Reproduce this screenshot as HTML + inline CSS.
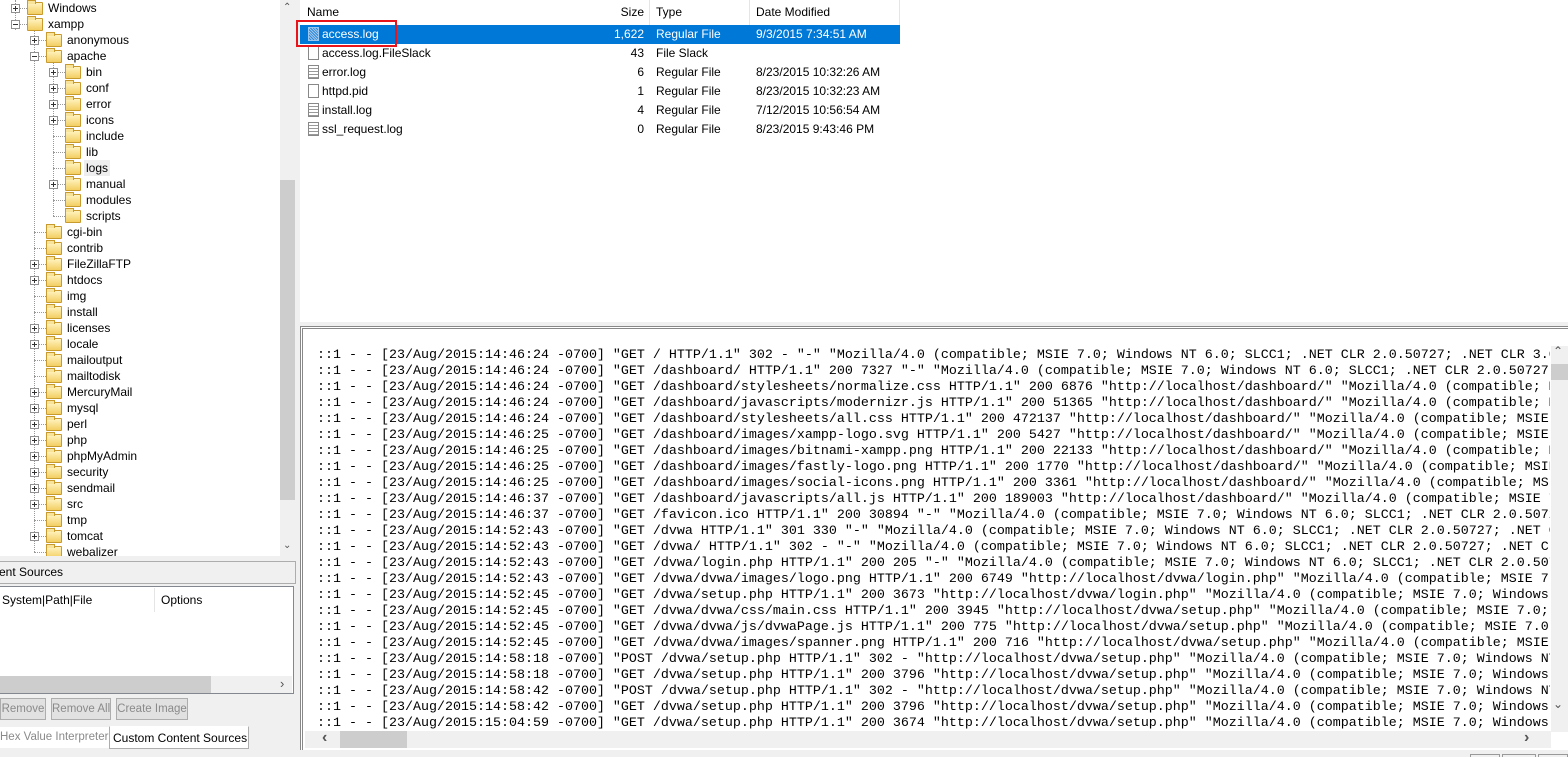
<!DOCTYPE html>
<html><head><meta charset="utf-8"><style>
*{margin:0;padding:0;box-sizing:border-box}
body{width:1568px;height:757px;overflow:hidden;background:#f0f0f0;font-family:"Liberation Sans",sans-serif;font-size:12px;color:#000;position:relative}
.a{position:absolute;white-space:nowrap}
.tree{left:0;top:0;width:280px;height:556px;background:#fff;overflow:hidden}
.row{position:absolute;height:16px;line-height:16px;white-space:nowrap}
.exp{position:absolute;width:9px;height:9px;border:1px solid #919191;background:#fff;top:4px}
.exp:before{content:"";position:absolute;left:1px;top:3px;width:5px;height:1px;background:#333}
.exp.p:after{content:"";position:absolute;left:3px;top:1px;width:1px;height:5px;background:#333}
.fold{position:absolute;top:1px;width:16px;height:13px;border:1px solid #c99a2e;border-radius:1px;background:linear-gradient(#fff3c0,#f3cf63)}
.fold:before{content:"";position:absolute;left:-1px;top:-3px;width:7px;height:3px;border:1px solid #c99a2e;border-bottom:none;background:#f8e39a}
.dot{position:absolute;border-top:1px dotted #999;height:0;top:8px}
.vd{position:absolute;border-left:1px dotted #999;width:0}
.lst{left:300px;top:0;width:600px;height:140px}
.lr{position:absolute;left:0;width:600px;height:19px;line-height:19px;font-size:12px}
.log{left:305px;top:348px;width:1245px;height:382px;overflow:hidden;font-family:"Liberation Mono",monospace;font-size:13.33px;line-height:16px;white-space:pre;padding-left:12px}
.btn{position:absolute;top:698px;height:22px;line-height:20px;border:1px solid #adadad;background:#e1e1e1;color:#8a8a8a;text-align:center;white-space:nowrap;overflow:hidden;font-size:11.5px}
.fi{position:absolute;left:8px;top:2px;width:11px;height:14px;border:1px solid #888;background:#fff}
</style></head><body>
<div class="a tree" id="tree"></div>
<div class="a" style="left:280px;top:0;width:16px;height:556px;background:#f0f0f0"></div>
<div class="a" style="left:280px;top:180px;width:15px;height:320px;background:#cdcdcd"></div>
<div class="a" style="left:283px;top:2px;font-size:10px;color:#555">&#8963;</div>
<div class="a" style="left:283px;top:540px;font-size:10px;color:#555">&#8964;</div>
<div class="a" style="left:-2px;top:561px;width:298px;height:23px;border:1px solid #adadad;background:#f0f0f0;line-height:21px;font-size:12px">ent Sources</div>
<div class="a" style="left:-2px;top:586px;width:296px;height:108px;border:1px solid #828790;background:#fff"></div>
<div class="a" style="left:2px;top:593px;line-height:14px">System|Path|File</div>
<div class="a" style="left:154px;top:588px;width:1px;height:24px;background:#e5e5e5"></div>
<div class="a" style="left:161px;top:593px;line-height:14px">Options</div>
<div class="a" style="left:0;top:676px;width:292px;height:17px;background:#f0f0f0"></div>
<div class="a" style="left:0;top:676px;width:211px;height:17px;background:#cdcdcd"></div>
<div class="a" style="left:280px;top:676px;font-size:13px;color:#555">&#8250;</div>
<div class="btn" style="left:0;width:46px">Remove</div>
<div class="btn" style="left:51px;width:60px">Remove All</div>
<div class="btn" style="left:116px;width:72px">Create Image</div>
<div class="a" style="left:0;top:727px;width:110px;height:21px;line-height:21px;color:#8a8a8a;background:#fff;overflow:hidden;font-size:11.5px">Hex Value Interpreter</div>
<div class="a" style="left:109px;top:726px;width:140px;height:23px;line-height:22px;background:#fff;border:1px solid #adadad;border-top:1px solid #fff;padding-left:3px">Custom Content Sources</div>
<div class="a" style="left:297px;top:0;width:3px;height:757px;background:#f0f0f0"></div>
<div class="a" style="left:300px;top:0;width:1268px;height:322px;background:#fff"></div>
<div class="a lst">
<div class="a" style="left:0;top:0;width:600px;height:25px;line-height:25px">
<span class="a" style="left:7px">Name</span><span class="a" style="left:300px;width:44px;text-align:right">Size</span><span class="a" style="left:349px;top:0;width:1px;height:25px;background:#e5e5e5"></span><span class="a" style="left:356px">Type</span><span class="a" style="left:449px;top:0;width:1px;height:25px;background:#e5e5e5"></span><span class="a" style="left:456px">Date Modified</span><span class="a" style="left:599px;top:0;width:1px;height:25px;background:#e5e5e5"></span>
</div>
<div class="lr" style="top:25px;background:#0078d7;color:#fff"><div class="fi" style="background:repeating-linear-gradient(45deg,#9cc7ee 0 1px,#2f87d8 1px 2px);border-color:#9cc7ee"></div><span class="a" style="left:22px">access.log</span><span class="a" style="left:260px;width:84px;text-align:right">1,622</span><span class="a" style="left:356px">Regular File</span><span class="a" style="left:456px">9/3/2015 7:34:51 AM</span></div>
<div class="lr" style="top:44px"><div class="fi"></div><span class="a" style="left:22px">access.log.FileSlack</span><span class="a" style="left:260px;width:84px;text-align:right">43</span><span class="a" style="left:356px">File Slack</span></div>
<div class="lr" style="top:63px"><div class="fi" style="background:repeating-linear-gradient(#fff 0 2px,#999 2px 3px)"></div><span class="a" style="left:22px">error.log</span><span class="a" style="left:260px;width:84px;text-align:right">6</span><span class="a" style="left:356px">Regular File</span><span class="a" style="left:456px">8/23/2015 10:32:26 AM</span></div>
<div class="lr" style="top:82px"><div class="fi"></div><span class="a" style="left:22px">httpd.pid</span><span class="a" style="left:260px;width:84px;text-align:right">1</span><span class="a" style="left:356px">Regular File</span><span class="a" style="left:456px">8/23/2015 10:32:23 AM</span></div>
<div class="lr" style="top:101px"><div class="fi" style="background:repeating-linear-gradient(#fff 0 2px,#999 2px 3px)"></div><span class="a" style="left:22px">install.log</span><span class="a" style="left:260px;width:84px;text-align:right">4</span><span class="a" style="left:356px">Regular File</span><span class="a" style="left:456px">7/12/2015 10:56:54 AM</span></div>
<div class="lr" style="top:120px"><div class="fi" style="background:repeating-linear-gradient(#fff 0 2px,#999 2px 3px)"></div><span class="a" style="left:22px">ssl_request.log</span><span class="a" style="left:260px;width:84px;text-align:right">0</span><span class="a" style="left:356px">Regular File</span><span class="a" style="left:456px">8/23/2015 9:43:46 PM</span></div>
</div>
<div class="a" style="left:296px;top:20px;width:101px;height:27px;border:2px solid #e8141b"></div>
<div class="a" style="left:300px;top:326px;width:1268px;height:424px;border-top:3px double #888;border-left:3px double #888;background:#fff"></div>
<div class="a log">::1 - - [23/Aug/2015:14:46:24 -0700] "GET / HTTP/1.1" 302 - "-" "Mozilla/4.0 (compatible; MSIE 7.0; Windows NT 6.0; SLCC1; .NET CLR 2.0.50727; .NET CLR 3.0
::1 - - [23/Aug/2015:14:46:24 -0700] "GET /dashboard/ HTTP/1.1" 200 7327 "-" "Mozilla/4.0 (compatible; MSIE 7.0; Windows NT 6.0; SLCC1; .NET CLR 2.0.50727
::1 - - [23/Aug/2015:14:46:24 -0700] "GET /dashboard/stylesheets/normalize.css HTTP/1.1" 200 6876 "http://localhost/dashboard/" "Mozilla/4.0 (compatible; M
::1 - - [23/Aug/2015:14:46:24 -0700] "GET /dashboard/javascripts/modernizr.js HTTP/1.1" 200 51365 "http://localhost/dashboard/" "Mozilla/4.0 (compatible; M
::1 - - [23/Aug/2015:14:46:24 -0700] "GET /dashboard/stylesheets/all.css HTTP/1.1" 200 472137 "http://localhost/dashboard/" "Mozilla/4.0 (compatible; MSIE
::1 - - [23/Aug/2015:14:46:25 -0700] "GET /dashboard/images/xampp-logo.svg HTTP/1.1" 200 5427 "http://localhost/dashboard/" "Mozilla/4.0 (compatible; MSIE
::1 - - [23/Aug/2015:14:46:25 -0700] "GET /dashboard/images/bitnami-xampp.png HTTP/1.1" 200 22133 "http://localhost/dashboard/" "Mozilla/4.0 (compatible; M
::1 - - [23/Aug/2015:14:46:25 -0700] "GET /dashboard/images/fastly-logo.png HTTP/1.1" 200 1770 "http://localhost/dashboard/" "Mozilla/4.0 (compatible; MSIE
::1 - - [23/Aug/2015:14:46:25 -0700] "GET /dashboard/images/social-icons.png HTTP/1.1" 200 3361 "http://localhost/dashboard/" "Mozilla/4.0 (compatible; MSIE
::1 - - [23/Aug/2015:14:46:37 -0700] "GET /dashboard/javascripts/all.js HTTP/1.1" 200 189003 "http://localhost/dashboard/" "Mozilla/4.0 (compatible; MSIE 7
::1 - - [23/Aug/2015:14:46:37 -0700] "GET /favicon.ico HTTP/1.1" 200 30894 "-" "Mozilla/4.0 (compatible; MSIE 7.0; Windows NT 6.0; SLCC1; .NET CLR 2.0.5072
::1 - - [23/Aug/2015:14:52:43 -0700] "GET /dvwa HTTP/1.1" 301 330 "-" "Mozilla/4.0 (compatible; MSIE 7.0; Windows NT 6.0; SLCC1; .NET CLR 2.0.50727; .NET C
::1 - - [23/Aug/2015:14:52:43 -0700] "GET /dvwa/ HTTP/1.1" 302 - "-" "Mozilla/4.0 (compatible; MSIE 7.0; Windows NT 6.0; SLCC1; .NET CLR 2.0.50727; .NET CL
::1 - - [23/Aug/2015:14:52:43 -0700] "GET /dvwa/login.php HTTP/1.1" 200 205 "-" "Mozilla/4.0 (compatible; MSIE 7.0; Windows NT 6.0; SLCC1; .NET CLR 2.0.507
::1 - - [23/Aug/2015:14:52:43 -0700] "GET /dvwa/dvwa/images/logo.png HTTP/1.1" 200 6749 "http://localhost/dvwa/login.php" "Mozilla/4.0 (compatible; MSIE 7.
::1 - - [23/Aug/2015:14:52:45 -0700] "GET /dvwa/setup.php HTTP/1.1" 200 3673 "http://localhost/dvwa/login.php" "Mozilla/4.0 (compatible; MSIE 7.0; Windows
::1 - - [23/Aug/2015:14:52:45 -0700] "GET /dvwa/dvwa/css/main.css HTTP/1.1" 200 3945 "http://localhost/dvwa/setup.php" "Mozilla/4.0 (compatible; MSIE 7.0;
::1 - - [23/Aug/2015:14:52:45 -0700] "GET /dvwa/dvwa/js/dvwaPage.js HTTP/1.1" 200 775 "http://localhost/dvwa/setup.php" "Mozilla/4.0 (compatible; MSIE 7.0
::1 - - [23/Aug/2015:14:52:45 -0700] "GET /dvwa/dvwa/images/spanner.png HTTP/1.1" 200 716 "http://localhost/dvwa/setup.php" "Mozilla/4.0 (compatible; MSIE
::1 - - [23/Aug/2015:14:58:18 -0700] "POST /dvwa/setup.php HTTP/1.1" 302 - "http://localhost/dvwa/setup.php" "Mozilla/4.0 (compatible; MSIE 7.0; Windows NT
::1 - - [23/Aug/2015:14:58:18 -0700] "GET /dvwa/setup.php HTTP/1.1" 200 3796 "http://localhost/dvwa/setup.php" "Mozilla/4.0 (compatible; MSIE 7.0; Windows
::1 - - [23/Aug/2015:14:58:42 -0700] "POST /dvwa/setup.php HTTP/1.1" 302 - "http://localhost/dvwa/setup.php" "Mozilla/4.0 (compatible; MSIE 7.0; Windows NT
::1 - - [23/Aug/2015:14:58:42 -0700] "GET /dvwa/setup.php HTTP/1.1" 200 3796 "http://localhost/dvwa/setup.php" "Mozilla/4.0 (compatible; MSIE 7.0; Windows
::1 - - [23/Aug/2015:15:04:59 -0700] "GET /dvwa/setup.php HTTP/1.1" 200 3674 "http://localhost/dvwa/setup.php" "Mozilla/4.0 (compatible; MSIE 7.0; Windows</div>
<div class="a" style="left:1551px;top:346px;width:17px;height:386px;background:#f0f0f0"></div>
<div class="a" style="left:1551px;top:364px;width:17px;height:16px;background:#cdcdcd"></div>
<div class="a" style="left:1553px;top:344px;font-size:12px;color:#555">&#8963;</div>
<div class="a" style="left:1553px;top:697px;font-size:12px;color:#555">&#8964;</div>
<div class="a" style="left:305px;top:731px;width:1246px;height:17px;background:#f0f0f0"></div>
<div class="a" style="left:340px;top:731px;width:67px;height:17px;background:#cdcdcd"></div>
<div class="a" style="left:322px;top:729px;font-size:16px;font-weight:bold;color:#555">&#8249;</div>
<div class="a" style="left:1524px;top:729px;font-size:16px;font-weight:bold;color:#555">&#8250;</div>
<div class="a" style="left:1470px;top:754px;width:30px;height:3px;border:1px solid #999;border-bottom:none"></div>
<div class="a" style="left:1502px;top:754px;width:34px;height:3px;border:1px solid #999;border-bottom:none"></div>
<div class="a" style="left:1538px;top:754px;width:30px;height:3px;border:1px solid #999;border-bottom:none"></div>
<script>
var items=[["Windows",1,"p"],["xampp",1,"m"],["anonymous",2,"p"],["apache",2,"m"],["bin",3,"p"],["conf",3,"p"],["error",3,"p"],["icons",3,"p"],["include",3,""],["lib",3,""],["logs",3,"s"],["manual",3,"p"],["modules",3,""],["scripts",3,""],["cgi-bin",2,""],["contrib",2,""],["FileZillaFTP",2,"p"],["htdocs",2,"p"],["img",2,""],["install",2,""],["licenses",2,"p"],["locale",2,"p"],["mailoutput",2,""],["mailtodisk",2,""],["MercuryMail",2,"p"],["mysql",2,"p"],["perl",2,"p"],["php",2,"p"],["phpMyAdmin",2,"p"],["security",2,"p"],["sendmail",2,"p"],["src",2,"p"],["tmp",2,""],["tomcat",2,"p"],["webalizer",2,""]];
var h="";
h+='<div class="vd" style="left:15px;top:0;height:30px"></div>';
h+='<div class="vd" style="left:34px;top:30px;height:522px"></div>';
h+='<div class="vd" style="left:53px;top:62px;height:154px"></div>';
items.forEach(function(it,i){
 var y=i*16,l=it[1],ex=15+(l-1)*19,fx=27+(l-1)*19,tx=47+(l-1)*19;
 h+='<div class="dot" style="left:'+ex+'px;top:'+(y+8)+'px;width:'+(fx-ex)+'px"></div>';
 if(it[2]=="p"||it[2]=="m") h+='<div class="exp '+(it[2]=="p"?"p":"")+'" style="left:'+(ex-4)+'px;top:'+(y+4)+'px"></div>';
 h+='<div class="fold" style="left:'+fx+'px;top:'+(y+2)+'px"></div>';
 h+='<div class="row" style="left:'+(tx-1)+'px;top:'+y+'px;padding:0 2px;'+(it[2]=="s"?"background:#eee;":"")+'">'+it[0]+'</div>';
});
document.getElementById("tree").innerHTML=h;
</script>
</body></html>
